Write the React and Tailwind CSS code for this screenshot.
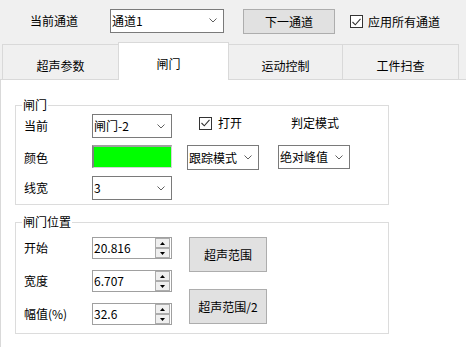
import React from "react"

const Chevron = () => (
  <svg width="8" height="5" viewBox="0 0 8 5" className="shrink-0">
    <polyline points="0.5,0.5 4,4 7.5,0.5" fill="none" stroke="#606060" strokeWidth="1" />
  </svg>
)

const Combo = ({ value, className }) => (
  <div className={`flex items-center justify-between bg-white border border-[#7a7a7a] pl-[1px] pr-[6px] ${className}`}>
    <span className="leading-[12px]">{value}</span>
    <Chevron />
  </div>
)

const Check = () => (
  <div className="w-[13px] h-[13px] border border-[#333333] bg-white flex items-center justify-center shrink-0">
    <svg width="9" height="8" viewBox="0 0 9 8">
      <polyline points="0.5,4 3.3,6.8 8.5,0.8" fill="none" stroke="#333333" strokeWidth="1.1" />
    </svg>
  </div>
)

const SpinBtn = ({ up }) => (
  <div className="w-[15px] h-[10px] border border-[#acacac] bg-[#efefef] flex items-center justify-center">
    <svg width="5" height="3" viewBox="0 0 5 3">
      <polygon points={up ? "0,3 2.5,0 5,3" : "0,0 2.5,3 5,0"} fill="#000" />
    </svg>
  </div>
)

const Spin = ({ value }) => (
  <div className="w-[80px] h-[22px] border border-[#a0a0a0] bg-white flex items-center justify-between pl-[1px] pr-[1px]">
    <span className="leading-[12px]">{value}</span>
    <div className="flex flex-col">
      <SpinBtn up />
      <SpinBtn />
    </div>
  </div>
)

const Group = ({ title, className, children }) => (
  <div className={`relative border border-[#dcdcdc] ${className}`}>
    <span className="absolute left-[6px] -top-[7px] bg-white px-[1px] leading-[12px]">{title}</span>
    {children}
  </div>
)

const Tab = ({ label, className }) => (
  <div className={`mt-[2px] h-[36px] flex justify-center pt-[15px] border-t border-b border-[#d9d9d9] bg-[#f0f0f0] leading-[12px] ${className}`}>
    {label}
  </div>
)

export default function App() {
  return (
    <div className="w-[466px] h-[347px] bg-[#f0f0f0] overflow-hidden text-[12px] text-black font-['Noto_Sans_CJK_SC',sans-serif] flex flex-col">
      <div className="h-[42px] flex items-center pl-[30px] shrink-0">
        <span className="w-[80px] leading-[12px] -mt-[1px]">当前通道</span>
        <Combo value="通道1" className="w-[114px] h-[24px] -mt-[1px]" />
        <div className="ml-[19px] w-[92px] h-[25px] border border-[#adadad] bg-[#e1e1e1] flex items-center justify-center leading-[12px] mt-[1px]">
          下一通道
        </div>
        <div className="ml-[15px] flex items-center mt-[1px]">
          <Check />
          <span className="ml-[5px] leading-[12px]">应用所有通道</span>
        </div>
      </div>

      <div className="h-[38px] flex items-start shrink-0">
        <div className="w-[2px] mt-[2px] h-[36px] border-b border-[#d9d9d9]" />
        <Tab label="超声参数" className="w-[116px] border-l" />
        <div className="w-[111px] h-[38px] bg-white border-l border-r border-t border-[#d9d9d9] flex justify-center pt-[15px] pr-[10px] leading-[12px]">
          闸门
        </div>
        <Tab label="运动控制" className="w-[114px] border-r" />
        <Tab label="工件扫查" className="w-[116px] border-r" />
        <div className="flex-1 mt-[2px] h-[36px] border-b border-[#d9d9d9]" />
      </div>

      <div className="flex-1 bg-white border-l border-[#d9d9d9] pl-[14px] pt-[25px]">
        <Group title="闸门" className="w-[374px] h-[100px] pt-[8px] pl-[8px]">
          <div className="flex flex-col gap-[6px]">
            <div className="flex items-center h-[24px]">
              <span className="w-[68px] leading-[12px]">当前</span>
              <Combo value="闸门-2" className="w-[80px] h-[24px]" />
              <div className="ml-[27px] flex items-center -mt-[6px]">
                <Check />
                <span className="ml-[6px] leading-[12px]">打开</span>
              </div>
              <span className="ml-[49px] leading-[12px] -mt-[6px]">判定模式</span>
            </div>
            <div className="flex items-start h-[25px] mt-[1px]">
              <span className="w-[68px] leading-[12px] self-center">颜色</span>
              <div className="w-[80px] h-[23px] bg-[#00ff00] border-t-2 border-l-2 border-r border-b border-t-[#a0a0a0] border-l-[#808080] border-r-[#d4d4d4] border-b-[#d4d4d4]" />
              <Combo value="跟踪模式" className="ml-[15px] w-[72px] h-[25px]" />
              <Combo value="绝对峰值" className="ml-[19px] w-[72px] h-[24px]" />
            </div>
            <div className="flex items-center h-[24px]">
              <span className="w-[68px] leading-[12px]">线宽</span>
              <Combo value="3" className="w-[80px] h-[24px]" />
            </div>
          </div>
        </Group>

        <Group title="闸门位置" className="mt-[17px] w-[374px] h-[112px] pt-[14px] pl-[8px] flex">
          <div className="flex flex-col gap-[11px]">
            <div className="flex items-center">
              <span className="w-[68px] leading-[12px]">开始</span>
              <Spin value="20.816" />
            </div>
            <div className="flex items-center">
              <span className="w-[68px] leading-[12px]">宽度</span>
              <Spin value="6.707" />
            </div>
            <div className="flex items-center">
              <span className="w-[68px] leading-[12px]">幅值(%)</span>
              <Spin value="32.6" />
            </div>
          </div>
          <div className="ml-[17px] flex flex-col gap-[17px]">
            <div className="w-[78px] h-[35px] border border-[#adadad] bg-[#e1e1e1] flex items-center justify-center leading-[12px]">
              超声范围
            </div>
            <div className="w-[78px] h-[35px] border border-[#adadad] bg-[#e1e1e1] flex items-center justify-center leading-[12px]">
              超声范围/2
            </div>
          </div>
        </Group>
      </div>
    </div>
  )
}
